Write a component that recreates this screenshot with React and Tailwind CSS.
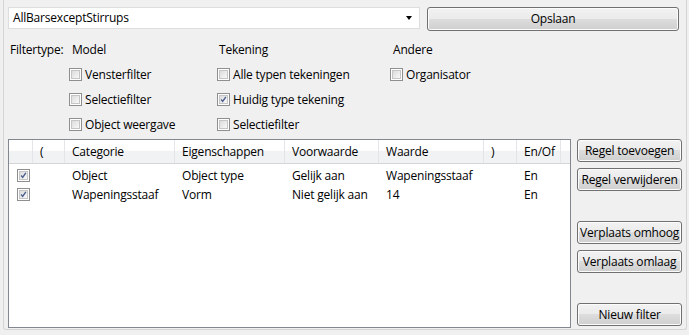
import React from 'react';

const Check = ({ checked = false }) => (
  <div className="w-[13px] h-[13px] shrink-0 border border-[#8f8f8f] bg-white p-[1px]">
    <div className="w-full h-full bg-gradient-to-br from-[#dcdcdc] to-[#f8f8f8] border border-[#c5c5c5] flex items-center justify-center">
      {checked && (
        <svg width="9" height="9" viewBox="0 0 9 9">
          <path d="M1.5 4.5 L3.5 7 L7.5 1.2" fill="none" stroke="#4a5f8e" strokeWidth="1.8" />
        </svg>
      )}
    </div>
  </div>
);

const Option = ({ label, checked }) => (
  <div className="h-[25px] flex items-center gap-[3px]">
    <Check checked={checked} />
    <span>{label}</span>
  </div>
);

const WinButton = ({ children, className = '' }) => (
  <button className={`h-[23px] border border-[#707070] rounded-[3px] bg-[linear-gradient(#f2f2f2_0%,#ebebeb_49%,#dddddd_50%,#cfcfcf_100%)] shadow-[inset_0_0_0_1px_#fcfcfc] text-black flex items-center justify-center whitespace-nowrap ${className}`}>
    {children}
  </button>
);

const columns = [
  { title: '', w: 'w-[24px]' },
  { title: '(', w: 'w-[32px]' },
  { title: 'Categorie', w: 'w-[110px]' },
  { title: 'Eigenschappen', w: 'w-[110px]' },
  { title: 'Voorwaarde', w: 'w-[94px]' },
  { title: 'Waarde', w: 'w-[105px]' },
  { title: ')', w: 'w-[33px]' },
  { title: 'En/Of', w: 'w-[44px]' },
];

const rows = [
  ['Object', 'Object type', 'Gelijk aan', 'Wapeningsstaaf', '', 'En'],
  ['Wapeningsstaaf', 'Vorm', 'Niet gelijk aan', '14', '', 'En'],
];

export default function App() {
  return (
    <div className="w-[689px] h-[335px] bg-[#f0f0f0] overflow-hidden text-[12px] tracking-[-0.2px] text-black font-['Open_Sans',sans-serif] leading-none">
      <div className="ml-[3px] w-[684px] h-[330px] border-x border-b border-[#d5d5d5] rounded-b-[3px] px-[4px] pt-[7px]">
        {/* bovenste rij: filternaam + opslaan */}
        <div className="flex">
          <div className="w-[412px] h-[22px] bg-white border border-[#dedede] flex items-center justify-between pl-[4px] pr-[7px]">
            <span>AllBarsexceptStirrups</span>
            <span className="w-0 h-0 border-x-[3.5px] border-x-transparent border-t-[4px] border-t-black" />
          </div>
          <WinButton className="ml-[7px] w-[252px] h-[24px]">Opslaan</WinButton>
        </div>

        {/* filtertype */}
        <div className="flex mt-[6px]">
          <div className="w-[61px] pl-[2px]">
            <div className="h-[25px] flex items-center">Filtertype:</div>
          </div>
          <div className="w-[148px]">
            <div className="h-[25px] flex items-center pl-[3px]">Model</div>
            <Option label="Vensterfilter" />
            <Option label="Selectiefilter" />
            <Option label="Object weergave" />
          </div>
          <div className="w-[173px]">
            <div className="h-[25px] flex items-center pl-[2px]">Tekening</div>
            <Option label="Alle typen tekeningen" />
            <Option label="Huidig type tekening" checked />
            <Option label="Selectiefilter" />
          </div>
          <div>
            <div className="h-[25px] flex items-center pl-[3px]">Andere</div>
            <Option label="Organisator" />
          </div>
        </div>

        {/* regels */}
        <div className="flex mt-[2px]">
          <div className="w-[564px] h-[189px] bg-white border border-[#828790]">
            <div className="flex h-[24px] border-b border-[#d5d5d5] bg-[linear-gradient(#ffffff_0%,#ffffff_45%,#f1f2f4_50%,#f1f2f4_100%)]">
              {columns.map((c, i) => (
                <div key={i} className={`${c.w} h-full border-r border-[#e3e5e8] flex items-center pl-[7px]`}>
                  {c.title}
                </div>
              ))}
            </div>
            <div className="mt-[2px]">
              {rows.map((r, i) => (
                <div key={i} className="flex h-[19px] items-center">
                  <div className="w-[24px] pl-[8px]">
                    <Check checked />
                  </div>
                  <div className="w-[32px]" />
                  {r.map((cell, j) => (
                    <div key={j} className={`${columns[j + 2].w} pl-[7px] whitespace-nowrap`}>{cell}</div>
                  ))}
                </div>
              ))}
            </div>
          </div>

          <div className="ml-[6px] w-[105px] flex flex-col">
            <WinButton className="w-full">Regel toevoegen</WinButton>
            <WinButton className="w-full mt-[6px]">Regel verwijderen</WinButton>
            <WinButton className="w-full mt-[30px]">Verplaats omhoog</WinButton>
            <WinButton className="w-full mt-[6px]">Verplaats omlaag</WinButton>
            <WinButton className="w-full mt-[30px]">Nieuw filter</WinButton>
          </div>
        </div>
      </div>
    </div>
  );
}
